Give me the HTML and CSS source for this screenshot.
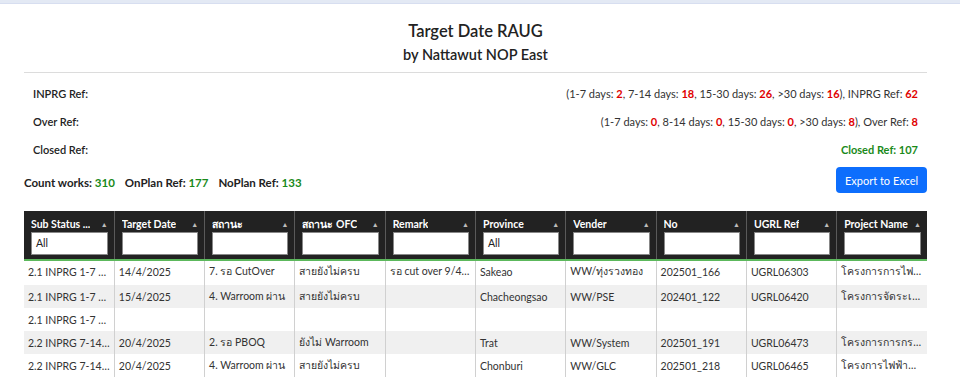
FILE: index.html
```html
<!DOCTYPE html>
<html lang="th">
<head>
<meta charset="utf-8">
<title>Target Date RAUG</title>
<link rel="stylesheet" href="styles.css">
</head>
<body>
<div class="topbar"></div>
<div class="page">
  <header class="head">
    <h1 class="title">Target Date RAUG</h1>
    <h2 class="subtitle">by Nattawut NOP East</h2>
  </header>
  <hr class="rule">
  <section class="summary">
    <div class="sum-row">
      <span class="sum-label">INPRG Ref:</span>
      <span class="sum-value">(1-7 days: <b class="red">2</b>, 7-14 days: <b class="red">18</b>, 15-30 days: <b class="red">26</b>, &gt;30 days: <b class="red">16</b>), INPRG Ref: <b class="red">62</b></span>
    </div>
    <div class="sum-row">
      <span class="sum-label">Over Ref:</span>
      <span class="sum-value">(1-7 days: <b class="red">0</b>, 8-14 days: <b class="red">0</b>, 15-30 days: <b class="red">0</b>, &gt;30 days: <b class="red">8</b>), Over Ref: <b class="red">8</b></span>
    </div>
    <div class="sum-row">
      <span class="sum-label">Closed Ref:</span>
      <span class="sum-value"><b class="green">Closed Ref: 107</b></span>
    </div>
  </section>
  <div class="toolbar">
    <div class="counts">
      <span class="count">Count works: <span class="green">310</span></span>
      <span class="count">OnPlan Ref: <span class="green">177</span></span>
      <span class="count">NoPlan Ref: <span class="green">133</span></span>
    </div>
    <button class="btn-export">Export to Excel</button>
  </div>
  <table class="grid">
    <thead>
      <tr>
        <th><div class="th-top"><span class="th-name">Sub Status ...</span><span class="sort">&#9650;</span></div><div class="filter">All</div></th>
        <th><div class="th-top"><span class="th-name">Target Date</span><span class="sort">&#9650;</span></div><div class="filter"></div></th>
        <th><div class="th-top"><span class="th-name">สถานะ</span><span class="sort">&#9650;</span></div><div class="filter"></div></th>
        <th><div class="th-top"><span class="th-name">สถานะ OFC</span><span class="sort">&#9650;</span></div><div class="filter"></div></th>
        <th><div class="th-top"><span class="th-name">Remark</span><span class="sort">&#9650;</span></div><div class="filter"></div></th>
        <th><div class="th-top"><span class="th-name">Province</span><span class="sort">&#9650;</span></div><div class="filter">All</div></th>
        <th><div class="th-top"><span class="th-name">Vender</span><span class="sort">&#9650;</span></div><div class="filter"></div></th>
        <th><div class="th-top"><span class="th-name">No</span><span class="sort">&#9650;</span></div><div class="filter"></div></th>
        <th><div class="th-top"><span class="th-name">UGRL Ref</span><span class="sort">&#9650;</span></div><div class="filter"></div></th>
        <th><div class="th-top"><span class="th-name">Project Name</span><span class="sort">&#9650;</span></div><div class="filter"></div></th>
      </tr>
    </thead>
    <tbody>
      <tr>
        <td>2.1 INPRG 1-7 days</td><td>14/4/2025</td><td>7. รอ CutOver</td><td>สายยังไม่ครบ</td><td>รอ cut over 9/4/2025</td><td>Sakeao</td><td>WW/ทุ่งรวงทอง</td><td>202501_166</td><td>UGRL06303</td><td>โครงการการไฟฟ้าส่วนภูมิภาค</td>
      </tr>
      <tr>
        <td>2.1 INPRG 1-7 days</td><td>15/4/2025</td><td>4. Warroom ผ่าน</td><td>สายยังไม่ครบ</td><td></td><td>Chacheongsao</td><td>WW/PSE</td><td>202401_122</td><td>UGRL06420</td><td>โครงการจัดระเบียบสาย</td>
      </tr>
      <tr>
        <td>2.1 INPRG 1-7 days</td><td></td><td></td><td></td><td></td><td></td><td></td><td></td><td></td><td></td>
      </tr>
      <tr>
        <td>2.2 INPRG 7-14 days</td><td>20/4/2025</td><td>2. รอ PBOQ</td><td>ยังไม่ Warroom</td><td></td><td>Trat</td><td>WW/System</td><td>202501_191</td><td>UGRL06473</td><td>โครงการการกรมทางหลวง</td>
      </tr>
      <tr>
        <td>2.2 INPRG 7-14 days</td><td>20/4/2025</td><td>4. Warroom ผ่าน</td><td>สายยังไม่ครบ</td><td></td><td>Chonburi</td><td>WW/GLC</td><td>202501_218</td><td>UGRL06465</td><td>โครงการไฟฟ้าแหลมฉบัง</td>
      </tr>
    </tbody>
  </table>
</div>
</body>
</html>
```
FILE: styles.css
```css
* { box-sizing: border-box; }
html, body { margin: 0; padding: 0; background: #fff; }
body {
  font-family: Lato, "Noto Sans", sans-serif;
  color: #212529;
  font-size: 11px;
}
.topbar {
  height: 4px;
  background: #e3e9f4;
  border-bottom: 1px solid #d7def0;
}
.page {
  padding: 0 33px 0 24px;
}
.head {
  text-align: center;
  padding-top: 15px;
}
.title {
  margin: 0;
  font-size: 16.5px;
  font-weight: 600;
  line-height: 25px;
  color: #222;
}
.subtitle {
  margin: 0;
  font-size: 14.5px;
  font-weight: 600;
  line-height: 21px;
  color: #222;
}
.rule {
  margin: 7px 0 0 0;
  border: 0;
  border-top: 1px solid #dcdcdc;
}
.summary {
  padding: 6px 9px 0 9px;
}
.sum-row {
  display: flex;
  justify-content: space-between;
  align-items: center;
  height: 28px;
  font-size: 11px;
}
.sum-label { font-weight: 600; color: #222; }
.sum-value { color: #333; }
.red { color: #e00000; font-weight: 700; }
.green { color: #1a8a1a; font-weight: 700; }
.toolbar {
  display: flex;
  justify-content: space-between;
  align-items: center;
  margin-top: 3px;
  height: 28px;
}
.counts {
  display: flex;
  gap: 10px;
  font-weight: 700;
  font-size: 11.5px;
  padding-top: 4px;
  color: #222;
}
.btn-export {
  font-family: inherit;
  font-size: 11px;
  color: #fff;
  background: #0d6efd;
  border: 0;
  border-radius: 4px;
  height: 26px;
  width: 91px;
  padding: 0;
}
.grid {
  margin-top: 17px;
  width: 100%;
  border-collapse: collapse;
  table-layout: fixed;
}
.grid th {
  background: #222;
  color: #fff;
  text-align: left;
  font-weight: 700;
  padding: 5px 6px 4px 7px;
  border-left: 1px solid #5a5a5a;
  border-bottom: 2px solid #5cb85c;
  vertical-align: top;
}
.grid th:first-child { border-left: 0; }
.th-top {
  display: flex;
  justify-content: space-between;
  align-items: center;
  height: 16px;
  font-size: 10.5px;
}
.th-name {
  white-space: nowrap;
  overflow: hidden;
  text-overflow: ellipsis;
}
.sort {
  flex: none;
  font-size: 7px;
  color: #bbb;
  margin-left: 4px;
}
.filter {
  height: 23px;
  background: #fff;
  border: 1px solid #888;
  color: #222;
  font-weight: 400;
  font-size: 10.5px;
  line-height: 21px;
  padding-left: 4px;
}
.grid td {
  height: 23px;
  padding: 0 4px;
  border-left: 1px solid #d0d0d0;
  white-space: nowrap;
  overflow: hidden;
  text-overflow: ellipsis;
  color: #333;
  font-size: 10.5px;
}
.grid td:first-child { border-left: 0; }
.grid tbody tr:nth-child(even) td { background: #f0f0f0; }
.grid tbody tr:first-child td { height: 25px; padding-bottom: 3px; }
```
